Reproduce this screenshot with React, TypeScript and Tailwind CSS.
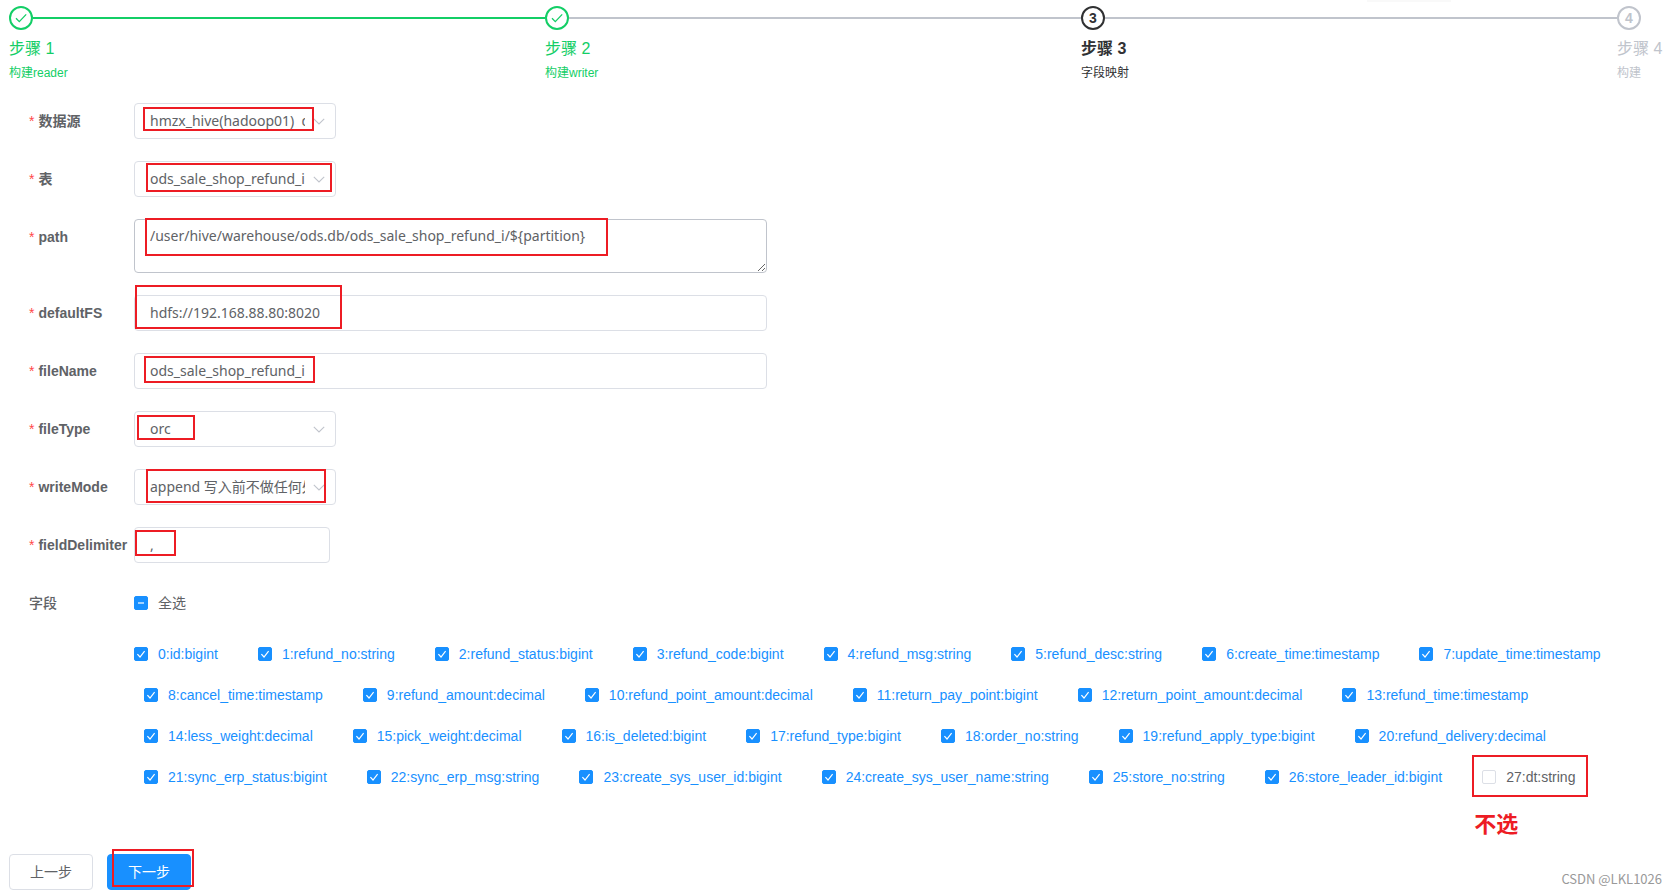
import { useState } from "react";
import type { ReactNode } from "react";

const FIELDS = [
  "0:id:bigint",
  "1:refund_no:string",
  "2:refund_status:bigint",
  "3:refund_code:bigint",
  "4:refund_msg:string",
  "5:refund_desc:string",
  "6:create_time:timestamp",
  "7:update_time:timestamp",
  "8:cancel_time:timestamp",
  "9:refund_amount:decimal",
  "10:refund_point_amount:decimal",
  "11:return_pay_point:bigint",
  "12:return_point_amount:decimal",
  "13:refund_time:timestamp",
  "14:less_weight:decimal",
  "15:pick_weight:decimal",
  "16:is_deleted:bigint",
  "17:refund_type:bigint",
  "18:order_no:string",
  "19:refund_apply_type:bigint",
  "20:refund_delivery:decimal",
  "21:sync_erp_status:bigint",
  "22:sync_erp_msg:string",
  "23:create_sys_user_id:bigint",
  "24:create_sys_user_name:string",
  "25:store_no:string",
  "26:store_leader_id:bigint",
  "27:dt:string",
];

const STEPS = [
  { title: "步骤 1", desc: "构建reader", status: "success" },
  { title: "步骤 2", desc: "构建writer", status: "success" },
  { title: "步骤 3", desc: "字段映射", status: "process" },
  { title: "步骤 4", desc: "构建", status: "wait" },
];

const STATUS_COLOR: Record<string, string> = {
  success: "text-[#13ce66]",
  process: "text-[#303133]",
  wait: "text-[#c0c4cc]",
};

const inputFont = "font-['Noto_Sans','Noto_Sans_CJK_SC',sans-serif] text-sm text-[#606266]";
const inputBox = "h-9 rounded border border-[#dcdfe6] bg-white px-[15px] outline-none focus:border-[#1890ff]";

// Red highlight frame drawn over a control
function Mark({ className }: { className: string }) {
  return <span aria-hidden="true" className={`pointer-events-none absolute border-2 border-[#ed1c24] ${className}`} />;
}

function Steps() {
  return (
    <ol className="flex">
      {STEPS.map((step, i) => {
        const last = i === STEPS.length - 1;
        return (
          <li key={step.title} className={`${last ? "w-[50px]" : "flex-1"} ${STATUS_COLOR[step.status]}`}>
            <div className="flex items-center">
              <span className="flex size-6 shrink-0 items-center justify-center rounded-full border-2 border-current bg-white text-sm font-bold">
                {step.status === "success" ? (
                  <svg viewBox="0 0 12 10" className="h-[10px] w-3" fill="none" stroke="currentColor" strokeWidth="1.3">
                    <path d="M1 5.2 4.3 8.6 11.2 1.4" />
                  </svg>
                ) : (
                  i + 1
                )}
              </span>
              {!last && <span className={`h-[2px] flex-1 ${i === 0 ? "bg-[#13ce66]" : "bg-[#c0c4cc]"}`} />}
            </div>
            <div className={`whitespace-nowrap text-base leading-[38px] ${step.status === "process" ? "font-bold" : ""}`}>
              {step.title}
            </div>
            <div className="text-xs leading-[10px]">{step.desc}</div>
          </li>
        );
      })}
    </ol>
  );
}

function FormItem({ label, id, children }: { label: string; id: string; children: ReactNode }) {
  return (
    <div className="mb-[22px] flex items-start">
      <label htmlFor={id} className="w-[105px] shrink-0 whitespace-nowrap text-sm leading-9 font-bold text-[#606266]">
        <span className="mr-1 font-normal text-[#ff4949]">*</span>
        {label}
      </label>
      {children}
    </div>
  );
}

function Select({ id, value, children }: { id: string; value: string; children?: ReactNode }) {
  return (
    <div className="relative w-[202px]">
      <select id={id} className={`${inputBox} ${inputFont} w-full appearance-none pr-[30px]`}>
        <option>{value}</option>
      </select>
      <svg
        viewBox="0 0 12 7"
        className="pointer-events-none absolute top-[15px] right-[11px] h-[7px] w-3"
        fill="none"
        stroke="#c0c4cc"
        strokeWidth="1.1"
      >
        <path d="M.8.8 6 6 11.2.8" />
      </svg>
      {children}
    </div>
  );
}

type CheckboxProps = {
  label: string;
  checked: boolean;
  indeterminate?: boolean;
  onChange: () => void;
};

function Checkbox({ label, checked, indeterminate, onChange }: CheckboxProps) {
  const filled = checked || indeterminate;
  return (
    <label className="flex cursor-pointer items-center gap-[10px] text-sm leading-5">
      <span className="relative flex size-[14px] shrink-0">
        <input
          type="checkbox"
          checked={checked}
          onChange={onChange}
          className={`size-[14px] appearance-none rounded-[2px] border ${
            filled ? "border-[#1890ff] bg-[#1890ff]" : "border-[#dcdfe6] bg-white"
          }`}
        />
        {filled && (
          <svg viewBox="0 0 14 14" className="pointer-events-none absolute inset-0" fill="none" stroke="white">
            {indeterminate ? (
              <path d="M4 7h6" strokeWidth="2" opacity=".6" />
            ) : (
              <path d="M3.4 7.2 6 10 10.6 4.2" strokeWidth="1.2" />
            )}
          </svg>
        )}
      </span>
      <span className={checked ? "text-[#1890ff]" : "text-[#606266]"}>{label}</span>
    </label>
  );
}

export default function App() {
  const [selected, setSelected] = useState<string[]>(FIELDS.slice(0, -1));
  const allSelected = selected.length === FIELDS.length;

  const toggle = (field: string) => {
    setSelected((prev) => (prev.includes(field) ? prev.filter((f) => f !== field) : [...prev, field]));
  };

  return (
    <div className="relative min-h-screen bg-white px-[9px] pt-[6px] font-['Liberation_Sans','Noto_Sans_CJK_SC',sans-serif]">
      <div className="absolute top-0 right-[225px] h-[2px] w-[84px] bg-[#f9f9f9]" />
      <Steps />

      <form className="pt-[25px] pl-5" onSubmit={(e) => e.preventDefault()}>
        <FormItem label="数据源" id="datasource">
          <Select id="datasource" value={"hmzx_hive(hadoop01)\u00a0 default"}>
            <Mark className="top-1 left-[9px] h-6 w-[171px]" />
          </Select>
        </FormItem>
        <FormItem label="表" id="table">
          <Select id="table" value="ods_sale_shop_refund_i">
            <Mark className="top-[2px] left-3 h-[29px] w-[186px]" />
          </Select>
        </FormItem>
        <FormItem label="path" id="path">
          <div className="relative w-[633px]">
            <textarea
              id="path"
              rows={2}
              defaultValue="/user/hive/warehouse/ods.db/ods_sale_shop_refund_i/${partition}"
              className={`${inputFont} block h-[54px] w-full rounded border border-[#c0c4cc] px-[15px] py-[5px] leading-[21px] outline-none`}
            />
            <Mark className="-top-px left-[11px] h-[38px] w-[463px]" />
          </div>
        </FormItem>
        <FormItem label="defaultFS" id="defaultFS">
          <div className="relative w-[633px]">
            <input
              id="defaultFS"
              defaultValue="hdfs://192.168.88.80:8020"
              className={`${inputBox} ${inputFont} w-full pb-[2px]`}
            />
            <Mark className="-top-[10px] left-px h-11 w-[207px]" />
          </div>
        </FormItem>
        <FormItem label="fileName" id="fileName">
          <div className="relative w-[633px]">
            <input
              id="fileName"
              defaultValue="ods_sale_shop_refund_i"
              className={`${inputBox} ${inputFont} w-full pb-[2px]`}
            />
            <Mark className="top-[3px] left-[10px] h-[27px] w-[171px]" />
          </div>
        </FormItem>
        <FormItem label="fileType" id="fileType">
          <Select id="fileType" value="orc">
            <Mark className="top-1 left-[3px] h-[25px] w-[58px]" />
          </Select>
        </FormItem>
        <FormItem label="writeMode" id="writeMode">
          <Select id="writeMode" value="append 写入前不做任何处理">
            <Mark className="top-0 left-3 h-[34px] w-[180px]" />
          </Select>
        </FormItem>
        <FormItem label="fieldDelimiter" id="fieldDelimiter">
          <div className="relative w-[196px]">
            <input id="fieldDelimiter" defaultValue="," className={`${inputBox} ${inputFont} w-full pb-[2px]`} />
            <Mark className="top-[3px] left-px h-[26px] w-[41px]" />
          </div>
        </FormItem>

        <div className="flex items-start">
          <span className="w-[105px] shrink-0 text-sm leading-9 font-medium text-[#606266]">字段</span>
          <div className="flex-1">
            <div className="flex h-9 items-center">
              <Checkbox
                label="全选"
                checked={allSelected}
                indeterminate={!allSelected && selected.length > 0}
                onChange={() => setSelected(allSelected ? [] : FIELDS)}
              />
            </div>
            <div className="mt-3 flex flex-wrap">
              {FIELDS.map((field) => (
                <div key={field} className="relative mr-[30px] ml-[10px] flex h-[41px] items-center first:ml-0">
                  <Checkbox label={field} checked={selected.includes(field)} onChange={() => toggle(field)} />
                  {field === "27:dt:string" && (
                    <>
                      <Mark className="-top-px -left-[10px] h-[42px] w-[116px]" />
                      <span className="absolute top-[53px] -left-2 text-[22px] leading-8 font-bold whitespace-nowrap text-[#ed1c24]">
                        不选
                      </span>
                    </>
                  )}
                </div>
              ))}
            </div>
          </div>
        </div>
      </form>

      <div className="mt-[57px] flex gap-[14px] pb-1 text-sm">
        <button type="button" className="h-9 rounded border border-[#dcdfe6] bg-white px-[20px] text-[#606266]">
          上一步
        </button>
        <div className="relative">
          <button type="button" className="h-9 rounded border border-[#1890ff] bg-[#1890ff] px-[20px] text-white">
            下一步
          </button>
          <Mark className="-top-[5px] left-[5px] h-[38px] w-[82px]" />
        </div>
      </div>

      <span className="absolute right-[14px] bottom-[5px] font-['Noto_Sans_CJK_SC',sans-serif] text-[13px] leading-5 text-[#999]">
        CSDN @LKL1026
      </span>
    </div>
  );
}
